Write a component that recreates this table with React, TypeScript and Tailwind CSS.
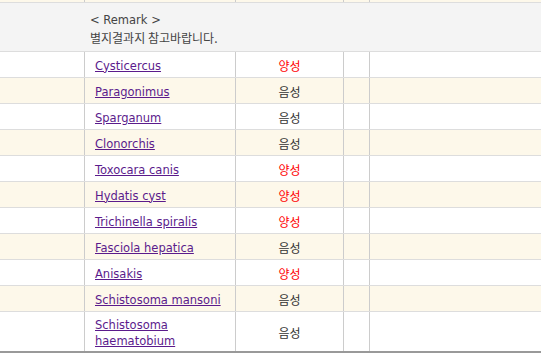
import React from "react";

const rows: { name: string; result: string; pos: boolean; tall?: boolean }[] = [
  { name: "Cysticercus", result: "양성", pos: true },
  { name: "Paragonimus", result: "음성", pos: false },
  { name: "Sparganum", result: "음성", pos: false },
  { name: "Clonorchis", result: "음성", pos: false },
  { name: "Toxocara canis", result: "양성", pos: true },
  { name: "Hydatis cyst", result: "양성", pos: true },
  { name: "Trichinella spiralis", result: "양성", pos: true },
  { name: "Fasciola hepatica", result: "음성", pos: false },
  { name: "Anisakis", result: "양성", pos: true },
  { name: "Schistosoma mansoni", result: "음성", pos: false },
  { name: "Schistosoma haematobium", result: "음성", pos: false, tall: true },
];

const font = { fontFamily: '"DejaVu Sans", Verdana, "Noto Sans CJK KR", sans-serif' };
const kr = { fontFamily: '"Noto Sans CJK KR", sans-serif' };

export default function App() {
  return (
    <div className="w-[541px] h-[353px] overflow-hidden bg-white text-[11.5px] text-[#333]" style={font}>
      {/* top strip (previous row end) */}
      <div className="flex h-[3px] border-b border-[#dddddd] bg-[#fdf8ea]">
        <div className="w-[84px]" />
        <div className="w-[151px] border-l border-[#cccccc]" />
        <div className="w-[108px] border-l border-[#cccccc]" />
        <div className="w-[26px] border-l border-[#cccccc]" />
        <div className="flex-1 border-l border-[#cccccc]" />
      </div>
      {/* remark row */}
      <div className="flex h-[49px] border-b border-[#dddddd] bg-[#f4f4f4]">
        <div className="w-[84px]" />
        <div className="flex-1 pl-[6px] pt-[4px] flex flex-col justify-center leading-[18px] text-[#444]">
          <div>&lt; Remark &gt;</div>
          <div className="text-[12px]" style={kr}>별지결과지 참고바랍니다.</div>
        </div>
      </div>
      {rows.map((r, i) => (
        <div
          key={r.name}
          className={`flex border-[#dddddd] ${r.tall ? "h-[41px] border-b-2 border-b-[#999999]" : "h-[26px] border-b"} ${i % 2 === 1 ? "bg-[#fdf8ea]" : "bg-white"}`}
        >
          <div className="w-[84px]" />
          <div className="w-[151px] border-l border-[#cccccc] pl-[10px] pr-[6px] pt-[2px] flex items-center leading-[16px]">
            <a href="#" className="text-[#5b1b8c] underline">{r.name}</a>
          </div>
          <div className="w-[108px] border-l border-[#cccccc] pt-[2px] flex items-center justify-center">
            <span className={`text-[12px] ${r.pos ? "text-[#ff0000]" : "text-[#333]"}`} style={kr}>
              {r.result}
            </span>
          </div>
          <div className="w-[26px] border-l border-[#cccccc]" />
          <div className="flex-1 border-l border-[#cccccc]" />
        </div>
      ))}
    </div>
  );
}
